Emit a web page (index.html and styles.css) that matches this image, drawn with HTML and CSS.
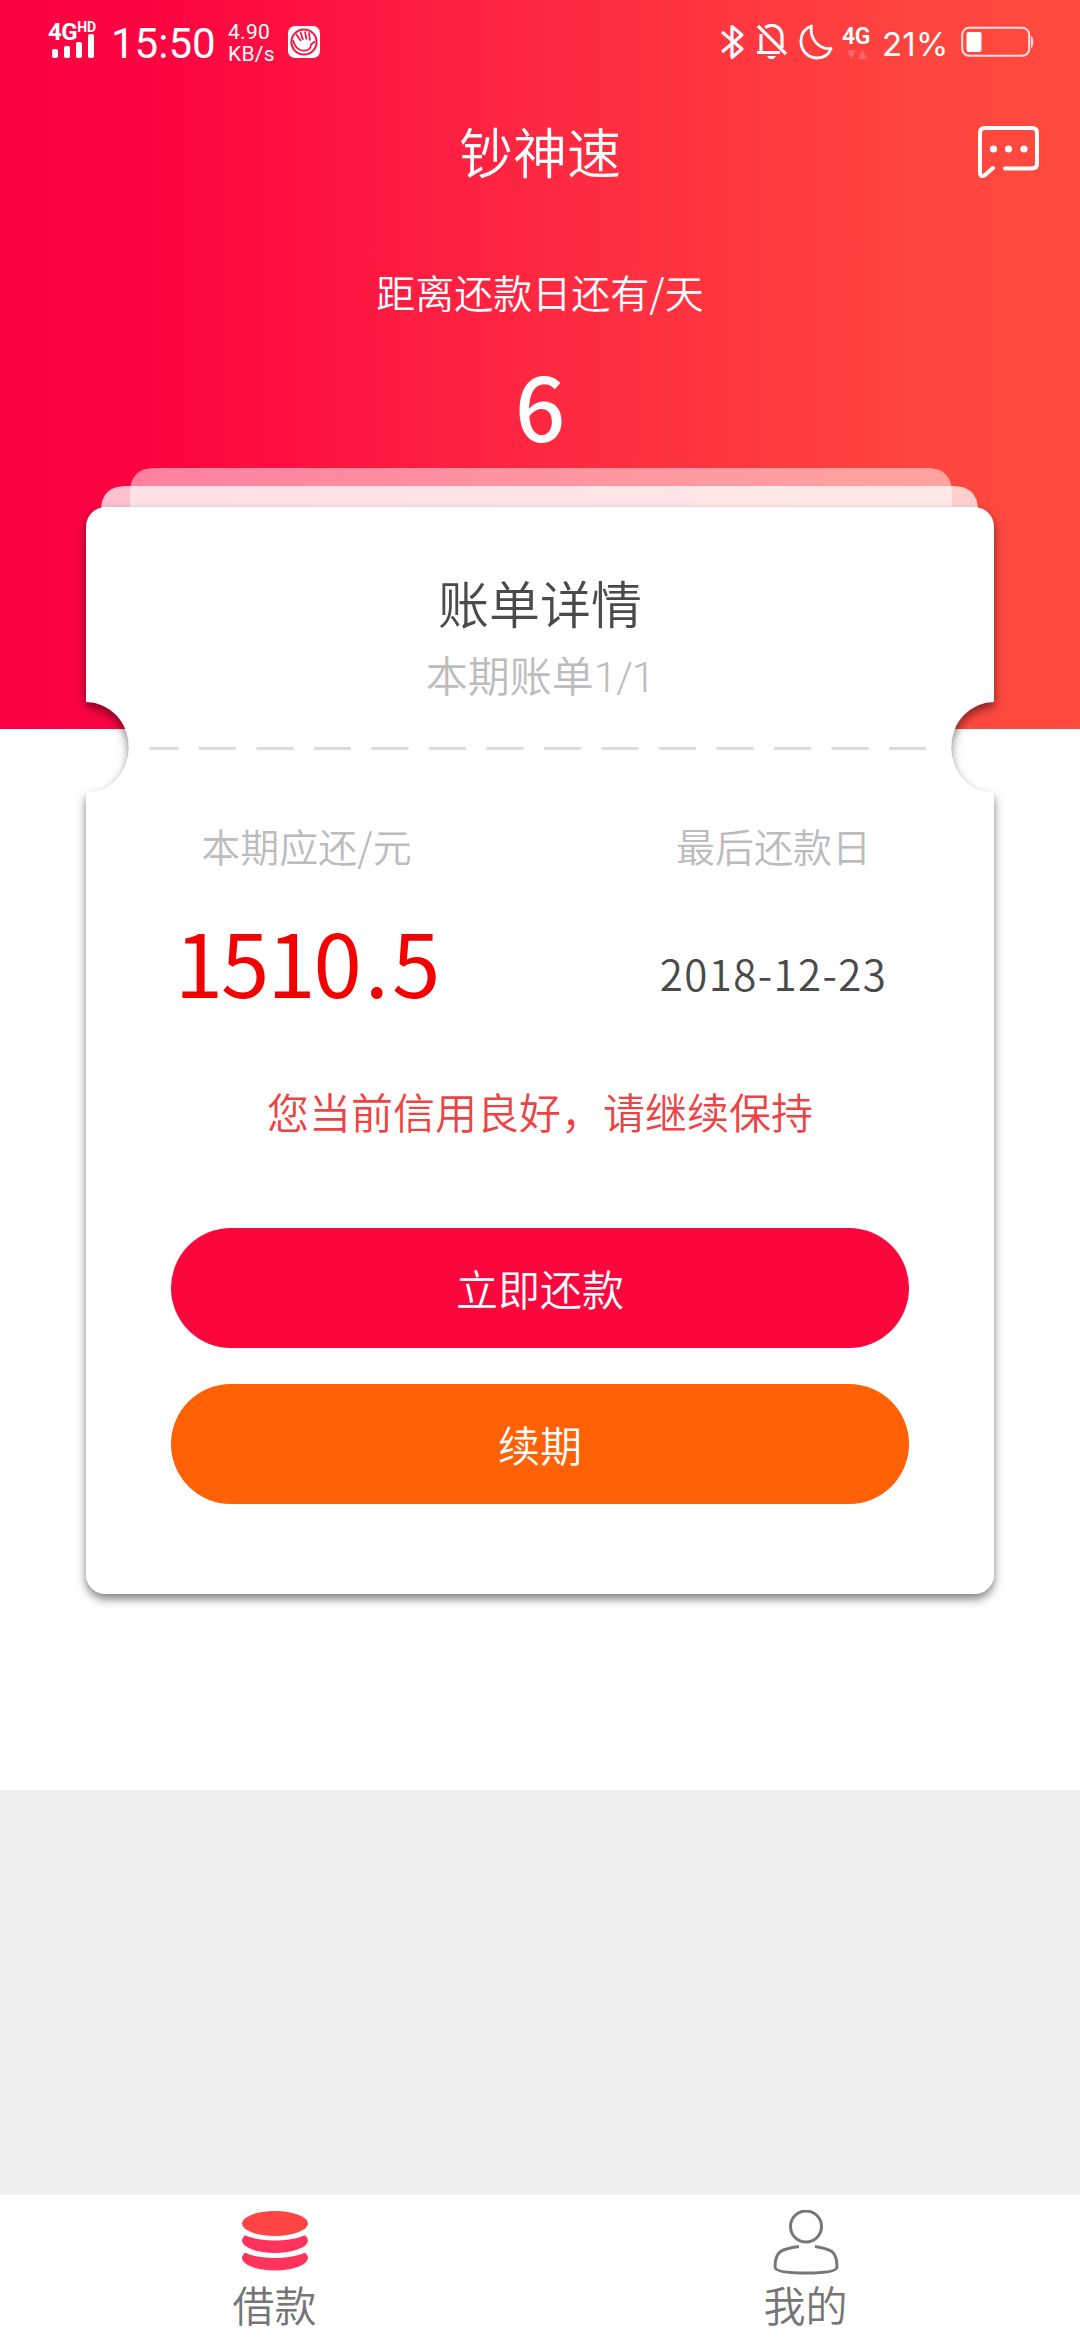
FILE: index.html
```html
<!DOCTYPE html>
<html lang="zh-CN">
<head>
<meta charset="utf-8">
<title>钞神速</title>
<link rel="stylesheet" href="styles.css">
</head>
<body>
<div class="page">
  <div class="hero-bg"></div>
  <header class="status">
    <div class="signal">
      <span class="net">4G<sup>HD</sup></span>
      <svg width="44" height="22" viewBox="0 0 44 22" fill="#fff"><rect x="0" y="13" width="6" height="9" rx="2"/><rect x="12" y="10" width="6" height="12" rx="2"/><rect x="24" y="6" width="6" height="16" rx="2"/><rect x="36" y="-2" width="6" height="24" rx="2"/></svg>
    </div>
    <span class="clock">15:50</span>
    <span class="speed"><span>4.90</span><span>KB/s</span></span>
    <svg class="hand" width="32" height="32" viewBox="0 0 32 32"><rect width="32" height="32" rx="7" fill="#fff"/><circle cx="16" cy="16" r="12.600" fill="none" stroke="#fd1040" stroke-width="2"/><path d="M8 8l5 7M12.500 6l2.500 8M17 5.500l1.500 8M21 6.500l1 8M5 14c1.500 6 4 9.500 9 10.500 6 1 9-2 9-6l4-3" fill="none" stroke="#fd1040" stroke-width="1.700"/></svg>
    <div class="right">
      <svg width="26" height="36" viewBox="0 0 26 36" fill="none" stroke="#fff" stroke-width="3.200" stroke-linejoin="round"><path d="M2 8l20 17-10 8.500V2.500L22 11 2 28"/></svg>
      <svg class="bell" width="32" height="36" viewBox="0 0 32 36" fill="none" stroke="#fff" stroke-width="3.200"><path d="M9 3.500c9-5 17 0 17 9V24M5 10v18M1 28.500h23M2 2l28 28"/><path d="M11 32h9l-2.500 3h-4z" fill="#fff" stroke="none"/></svg>
      <svg class="moon" width="34" height="36" viewBox="0 0 34 36" fill="none" stroke="#fff" stroke-width="2.800" stroke-linejoin="round"><path d="M12.500 2C4 5 1.500 12 2 19c1 9 8 15 16 15 7 0 12-4 14-9.500C20 26 10.500 15 12.500 2z"/></svg>
      <span class="net2">4G<svg width="20" height="10" viewBox="0 0 20 10" fill="#fff" fill-opacity=".2"><path d="M0 0h9L4.500 9zM11 9h9L15.500 0z"/></svg></span>
      <span class="pct">21%</span>
      <svg class="batt" width="74" height="32" viewBox="0 0 74 32"><rect x="1.200" y="1.800" width="67" height="28" rx="7" fill="none" stroke="#fff" stroke-opacity=".85" stroke-width="2"/><rect x="5.500" y="6" width="15" height="20" rx="2" fill="#fff"/><path d="M70 10c3 1 3 11 0 12z" fill="#fff" fill-opacity=".85"/></svg>
    </div>
  </header>
  <div class="titlebar">
    <h1>钞神速</h1>
    <svg class="chat" width="62" height="54" viewBox="0 0 62 54" fill="none" stroke="#fff" stroke-width="4" stroke-linecap="round" stroke-linejoin="round"><path d="M27 42.500H54q5 0 5-5V7q0-5-5-5H7Q2 2 2 7V46q0 6 5 3l8-7"/><g fill="#fff" stroke="none"><circle cx="15.500" cy="23" r="3.600"/><circle cx="30.500" cy="23" r="3.600"/><circle cx="46" cy="23" r="3.600"/></g></svg>
  </div>
  <p class="until">距离还款日还有/天</p>
  <p class="days">6</p>

  <main class="ticket">
    <svg class="shape" width="1080" height="1190" viewBox="0 450 1080 1190">
      <defs><filter id="sh" x="-5%" y="-5%" width="110%" height="110%"><feDropShadow dx="0" dy="5" stdDeviation="5" flood-color="#000" flood-opacity=".5"/></filter></defs>
      <path d="M130 520v-27q0-25 25-25H927q25 0 25 25v27z" fill="#fff" fill-opacity=".5"/>
      <path d="M101 520v-9q0-25 25-25H953q25 0 25 25v9z" fill="#fff" fill-opacity=".75"/>
      <path filter="url(#sh)" d="M106 507H974a20 20 0 0 1 20 20V702a43 45.500 0 0 0 0 91V1574a20 20 0 0 1-20 20H106a20 20 0 0 1-20-20V793a43 45.500 0 0 0 0-91V527a20 20 0 0 1 20-20z" fill="#fff"/>
      <path d="M149.500 748.500h29M199 748.500H926" stroke="#dcdcdc" stroke-width="3" stroke-dasharray="37 20.500"/>
    </svg>
    <div class="ticket-body">
      <h2>账单详情</h2>
      <p class="period">本期账单<span>1/1</span></p>
      <div class="cols">
        <section><p class="label">本期应还/元</p><p class="amount">1510<span>.</span>5</p></section>
        <section><p class="label">最后还款日</p><p class="date">2018-12-23</p></section>
      </div>
      <p class="credit">您当前信用良好，请继续保持</p>
      <button class="btn pay">立即还款</button>
      <button class="btn renew">续期</button>
    </div>
  </main>
  <div class="filler"></div>
  <nav class="tabs">
    <a><svg width="68" height="66" viewBox="0 0 68 66"><g fill="#ff335c"><ellipse cx="34" cy="48" rx="33" ry="12.500"/><ellipse cx="34" cy="35" rx="37" ry="13" fill="#fff"/><ellipse cx="34" cy="30.500" rx="33" ry="12.500"/><ellipse cx="34" cy="17.500" rx="37" ry="13" fill="#fff"/></g><ellipse cx="34" cy="13.500" rx="33" ry="12.500" fill="#ff4444"/></svg><span>借款</span></a>
    <a><svg width="68" height="66" viewBox="0 0 68 66" fill="none" stroke="#777" stroke-width="3" stroke-linejoin="round"><circle cx="34" cy="16.500" r="15.500"/><path d="M27 36.500C9 39 3 41 3 57q0 6 31 6t31-6C65 41 59 39 43 36.500"/></svg><span>我的</span></a>
  </nav>
</div>
</body>
</html>
```
FILE: styles.css
```css
* { box-sizing: border-box; margin: 0; padding: 0; }
body { width: 1080px; height: 2340px; overflow: hidden; background: #fff; font-family: "Noto Sans CJK SC", sans-serif; font-weight: 350; }
svg { display: block; flex: none; }
.page { position: relative; height: 2340px; display: flex; flex-direction: column; }
.hero-bg { position: absolute; inset: 0 0 auto; height: 729px; background: linear-gradient(90deg, #fb0042 0, #fc0541 15%, #ff2841 50%, #ff453f 85%, #ff4a3e 100%); }
.status, .titlebar, .until, .days, .ticket { position: relative; color: #fff; }
.status { height: 90px; display: flex; align-items: flex-start; font-family: Inter, sans-serif; font-weight: 400; padding: 0 46px 0 48px; }
.signal { width: 54px; padding-top: 22px; }
.net { display: flex; align-items: flex-start; font: 700 24px/20px Roboto, sans-serif; letter-spacing: -.5px; white-space: nowrap; }
.net sup { font-size: 14px; line-height: 10px; letter-spacing: 0; }
.signal svg { margin: -6px 0 0 4px; overflow: visible; }
.clock { margin: 22px 0 0 9px; width: 106px; font: 400 42px/44px Roboto, sans-serif; }
.speed { display: flex; flex-direction: column; margin: 21px 0 0 11px; width: 60px; font: 400 21px/22px Roboto, sans-serif; letter-spacing: .3px; }
.hand { margin-top: 26px; }
.right { margin-left: auto; display: flex; align-items: flex-start; padding-top: 24px; }
.bell { margin-left: 10px; }
.moon { margin-left: 11px; }
.net2 { margin-left: 9px; width: 30px; font: 600 23px/26px Roboto, sans-serif; letter-spacing: -.5px; }
.net2 svg { margin-left: 5px; }
.pct { margin-left: 10px; width: 68px; font: 400 33px/40px Inter, sans-serif; letter-spacing: .2px; }
.batt { margin: 2px -1px 0 11px; }
.titlebar { height: 130px; display: flex; justify-content: center; }
.titlebar h1 { font-size: 54px; line-height: 80px; font-weight: 350; margin-top: 21px; }
.chat { position: absolute; right: 40px; top: 36px; }
.until { text-align: center; font-size: 39px; line-height: 60px; margin-top: 41px; }
.days { text-align: center; font: 500 88px/100px "Noto Sans CJK SC", sans-serif; margin-top: 33px; height: 96px; }
.ticket { height: 1340px; }
.shape { position: absolute; left: 0; top: 0; }
.ticket-body { position: relative; padding: 114px 171px 0; display: flex; flex-direction: column; text-align: center; color: #4a4a4a; }
h2 { font-size: 51px; line-height: 76px; font-weight: 350; }
.period { font-size: 42px; line-height: 60px; height: 60px; color: #bcbcbc; margin-top: 4px; }
.period span { font-family: Roboto, sans-serif; font-weight: 350; letter-spacing: -1px; }
.cols { display: flex; margin: 111px -98px 0; justify-content: space-between; }
.cols section { width: 470px; }
.label { font-size: 39px; line-height: 60px; color: #bcbcbc; }
.amount { font: 400 87px/100px "Noto Sans CJK SC", sans-serif; letter-spacing: -2px; color: #f40000; margin-top: 35px; }
.amount span { margin: 0 5px; }
.date { font: 350 42px/60px "Noto Sans CJK SC", sans-serif; letter-spacing: 1.4px; margin-top: 68px; }
.credit { font-size: 42px; line-height: 60px; color: #ef4343; margin-top: 71px; }
.btn { height: 120px; border: 0; border-radius: 60px; color: #fff; font: 350 42px "Noto Sans CJK SC", sans-serif; padding-bottom: 2px; }
.pay { background: #fb073d; margin-top: 87px; }
.renew { background: #ff6104; margin-top: 36px; }
.filler { background: #f0f0f0; height: 405px; }
.tabs { display: flex; height: 145px; padding: 0 9px; background: #fff; color: #757575; font-size: 42px; line-height: 56px; }
.tabs a { width: 50%; display: flex; flex-direction: column; align-items: center; padding-top: 15px; }
```
